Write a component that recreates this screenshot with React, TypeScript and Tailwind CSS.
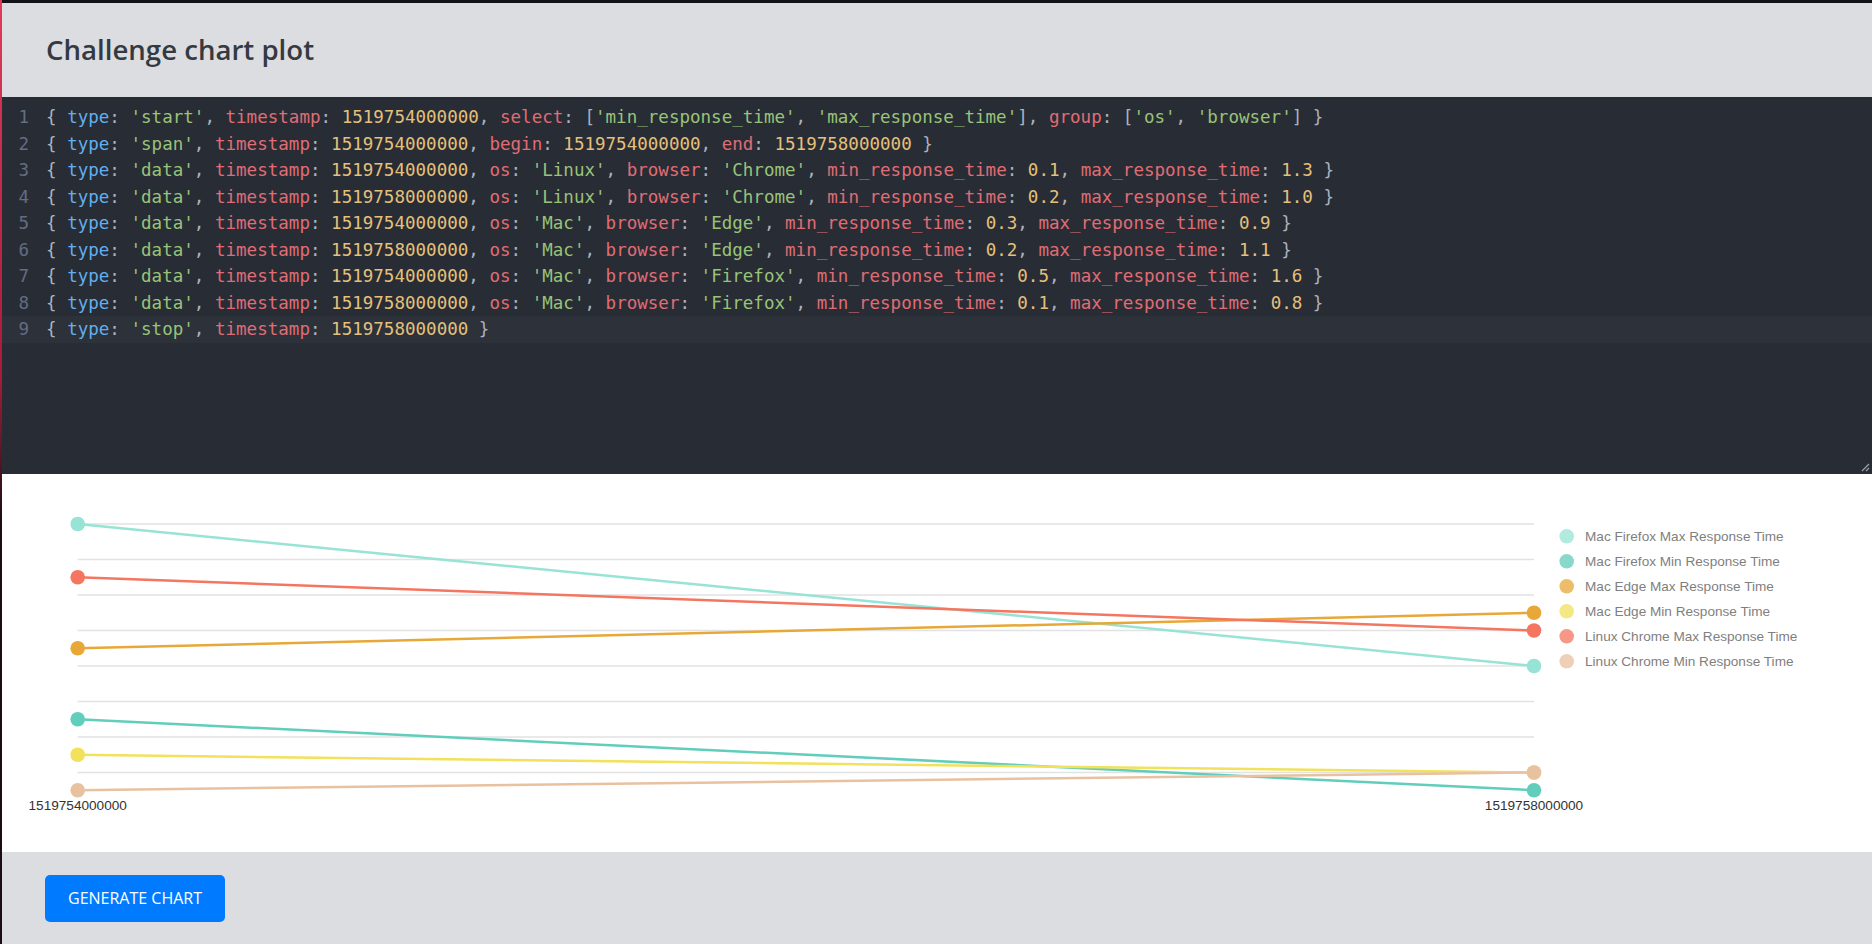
import React from "react";

type Pair = [string, string];

const LINES: Pair[][] = [
  [["type", "'start'"], ["timestamp", "1519754000000"], ["select", "['min_response_time', 'max_response_time']"], ["group", "['os', 'browser']"]],
  [["type", "'span'"], ["timestamp", "1519754000000"], ["begin", "1519754000000"], ["end", "1519758000000"]],
  [["type", "'data'"], ["timestamp", "1519754000000"], ["os", "'Linux'"], ["browser", "'Chrome'"], ["min_response_time", "0.1"], ["max_response_time", "1.3"]],
  [["type", "'data'"], ["timestamp", "1519758000000"], ["os", "'Linux'"], ["browser", "'Chrome'"], ["min_response_time", "0.2"], ["max_response_time", "1.0"]],
  [["type", "'data'"], ["timestamp", "1519754000000"], ["os", "'Mac'"], ["browser", "'Edge'"], ["min_response_time", "0.3"], ["max_response_time", "0.9"]],
  [["type", "'data'"], ["timestamp", "1519758000000"], ["os", "'Mac'"], ["browser", "'Edge'"], ["min_response_time", "0.2"], ["max_response_time", "1.1"]],
  [["type", "'data'"], ["timestamp", "1519754000000"], ["os", "'Mac'"], ["browser", "'Firefox'"], ["min_response_time", "0.5"], ["max_response_time", "1.6"]],
  [["type", "'data'"], ["timestamp", "1519758000000"], ["os", "'Mac'"], ["browser", "'Firefox'"], ["min_response_time", "0.1"], ["max_response_time", "0.8"]],
  [["type", "'stop'"], ["timestamp", "1519758000000"]],
];

const P = ({ children }: { children: React.ReactNode }) => <span className="text-[#abb2bf]">{children}</span>;
const S = ({ children }: { children: React.ReactNode }) => <span className="text-[#98c379]">{children}</span>;
const N = ({ children }: { children: React.ReactNode }) => <span className="text-[#e5c07b]">{children}</span>;

function Val({ v }: { v: string }) {
  if (v.startsWith("[")) {
    const items = v.slice(1, -1).split(", ");
    return (
      <>
        <P>[</P>
        {items.map((it, i) => (
          <React.Fragment key={i}>
            {i > 0 && <P>, </P>}
            <S>{it}</S>
          </React.Fragment>
        ))}
        <P>]</P>
      </>
    );
  }
  if (v.startsWith("'")) return <S>{v}</S>;
  return <N>{v}</N>;
}

function CodeLine({ pairs }: { pairs: Pair[] }) {
  return (
    <span>
      <P>{"{ "}</P>
      {pairs.map(([k, v], i) => (
        <React.Fragment key={i}>
          {i > 0 && <P>, </P>}
          <span className={k === "type" ? "text-[#61afef]" : "text-[#e06c75]"}>{k}</span>
          <P>: </P>
          <Val v={v} />
        </React.Fragment>
      ))}
      <P>{" }"}</P>
    </span>
  );
}

const X0 = 75.7;
const X1 = 1532;
const yOf = (v: number) => 50 + (1.6 - v) * 177.5;

const SERIES = [
  { name: "Mac Firefox Max Response Time", color: "#97e3d5", a: 1.6, b: 0.8 },
  { name: "Mac Firefox Min Response Time", color: "#61cdbb", a: 0.5, b: 0.1 },
  { name: "Mac Edge Max Response Time", color: "#e8a838", a: 0.9, b: 1.1 },
  { name: "Mac Edge Min Response Time", color: "#f1e15b", a: 0.3, b: 0.2 },
  { name: "Linux Chrome Max Response Time", color: "#f47560", a: 1.3, b: 1.0 },
  { name: "Linux Chrome Min Response Time", color: "#e8c1a0", a: 0.1, b: 0.2 },
];

function Chart() {
  const grid = [1.6, 1.4, 1.2, 1.0, 0.8, 0.6, 0.4, 0.2];
  return (
    <svg width={1870} height={378} viewBox="0 0 1870 378" className="block">
      {grid.map((g) => (
        <line key={g} x1={X0} x2={X1} y1={yOf(g)} y2={yOf(g)} stroke="#e2e2e2" strokeWidth={1.5} />
      ))}
      {SERIES.map((s) => (
        <line key={s.name} x1={X0} y1={yOf(s.a)} x2={X1} y2={yOf(s.b)} stroke={s.color} strokeWidth={2.5} />
      ))}
      {SERIES.map((s) => (
        <React.Fragment key={s.name + "p"}>
          <circle cx={X0} cy={yOf(s.a)} r={7.3} fill={s.color} />
          <circle cx={X1} cy={yOf(s.b)} r={7.3} fill={s.color} />
        </React.Fragment>
      ))}
      <text x={X0} y={331} textAnchor="middle" dominantBaseline="central" fontFamily="'Liberation Sans', Arial, sans-serif" fontSize={13.6} fill="#333333">
        1519754000000
      </text>
      <text x={X1} y={331} textAnchor="middle" dominantBaseline="central" fontFamily="'Liberation Sans', Arial, sans-serif" fontSize={13.6} fill="#333333">
        1519758000000
      </text>
      {SERIES.map((s, i) => (
        <g key={s.name + "l"} opacity={0.75}>
          <circle cx={1564.7} cy={62.3 + 25 * i} r={7.3} fill={s.color} />
          <text x={1583} y={62.3 + 25 * i} dominantBaseline="central" fontFamily="'Liberation Sans', Arial, sans-serif" fontSize={13.6} fill="#555555">
            {s.name}
          </text>
        </g>
      ))}
    </svg>
  );
}

export default function App() {
  return (
    <div className="flex h-[944px] w-[1872px] overflow-hidden">
      <div className="w-[2px] shrink-0 bg-linear-to-b from-[#e03a5a] via-[#a81a3c] via-40% to-[#1c0c13] to-55%" />
      <div className="flex flex-1 flex-col min-w-0">
        <div className="h-[3px] shrink-0 bg-[#141219]" />
        <div className="flex h-[94px] shrink-0 items-center bg-[#dcdde1] pl-[44px]">
          <h1 className="text-[27.6px] font-semibold text-[#343a40] [font-family:'Open_Sans',sans-serif]">Challenge chart plot</h1>
        </div>
        <div className="relative h-[377px] shrink-0 bg-[#282c34] pt-[7px] text-[17.55px] leading-[26.55px] [font-family:'DejaVu_Sans_Mono',monospace] whitespace-pre">
          {LINES.map((pairs, i) => (
            <div key={i} className={"flex " + (i === LINES.length - 1 ? "bg-[#2c313a]" : "")}>
              <div className="w-[44px] shrink-0 pr-[17px] text-right text-[#636d83]">{i + 1}</div>
              <CodeLine pairs={pairs} />
            </div>
          ))}
          <svg className="absolute bottom-[2px] right-[2px]" width="9" height="9" viewBox="0 0 9 9">
            <line x1="1" y1="8" x2="8" y2="1" stroke="#9aa0a8" strokeWidth="1.2" />
            <line x1="5" y1="8" x2="8" y2="5" stroke="#9aa0a8" strokeWidth="1.2" />
          </svg>
        </div>
        <div className="h-[378px] shrink-0 bg-white">
          <Chart />
        </div>
        <div className="flex flex-1 items-center bg-[#dcdde1] pl-[43px]">
          <button className="h-[47px] w-[180px] rounded-[5px] bg-[#007bff] text-[16px] text-white [font-family:'Open_Sans',sans-serif]">
            GENERATE CHART
          </button>
        </div>
      </div>
    </div>
  );
}
